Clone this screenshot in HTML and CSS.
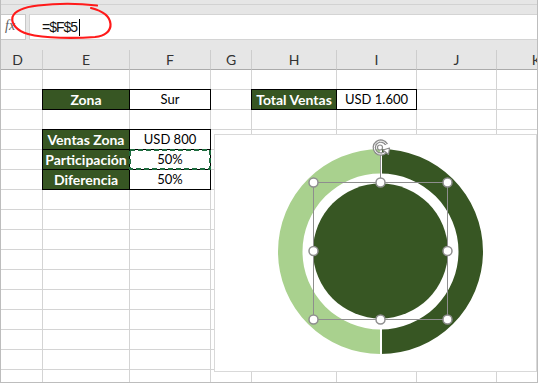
FILE: index.html
```html
<!DOCTYPE html>
<html lang="es">
<head>
    <meta charset="UTF-8">
    <title>Participación por zona</title>
    <link rel="stylesheet" href="styles.css">
</head>
<body>
    <div class="window">
        <div class="top-edge"></div>
        <div class="formula-bar">
            <div class="fx">fx</div>
            <div class="formula-input">=$F$5<span class="caret"></span></div>
        </div>

        <div class="sheet" id="sheet">
            <!-- cells are built by the script below -->
        </div>

        <div class="chart">
            <svg class="donut" width="321" height="236" viewBox="215 135 321 236">
                <!-- outer ring: Participación / Diferencia -->
                <path d="M380.5 149 A102.5 102.5 0 0 0 380.5 354 L380.5 329.5 A78 78 0 0 1 380.5 173.5 Z" fill="#a9d18e"/>
                <path d="M380.5 149 A102.5 102.5 0 0 1 380.5 354 L380.5 329.5 A78 78 0 0 0 380.5 173.5 Z" fill="#375623"/>
                <line x1="381" y1="147" x2="381" y2="356" stroke="#fff" stroke-width="2"/>
                <!-- inner pie -->
                <circle cx="380.5" cy="251" r="67.5" fill="#375623"/>

                <!-- selection frame -->
                <g class="selection">
                    <line x1="380.5" y1="155" x2="380.5" y2="182.5"/>
                    <rect x="313.5" y="182.5" width="134" height="137" fill="none"/>
                    <circle cx="313.5" cy="182.5" r="4.5"/>
                    <circle cx="380.5" cy="182.5" r="4.5"/>
                    <circle cx="447.5" cy="182.5" r="4.5"/>
                    <circle cx="313.5" cy="251" r="4.5"/>
                    <circle cx="447.5" cy="251" r="4.5"/>
                    <circle cx="313.5" cy="319.5" r="4.5"/>
                    <circle cx="380.5" cy="319.5" r="4.5"/>
                    <circle cx="447.5" cy="319.5" r="4.5"/>
                </g>
                <!-- rotate handle -->
                <g class="rotate">
                    <path d="M386 151.5 A6.5 6.5 0 1 1 386.5 144.5" stroke="#8c8c8c" stroke-width="3.5" fill="none"/>
                    <path d="M386 151.5 A6.5 6.5 0 1 1 386.5 144.5" stroke="#fff" stroke-width="1" fill="none"/>
                    <circle cx="380" cy="147.5" r="2.5" fill="#fff" stroke="#8c8c8c" stroke-width="1.2"/>
                    <path d="M383 150 L389.5 148 L388.5 154.5 Z" fill="#fff" stroke="#8c8c8c" stroke-width="1.2" stroke-linejoin="round"/>
                </g>
            </svg>
        </div>

        <svg class="scribble" width="120" height="45" viewBox="0 0 120 45">
            <path d="M97 5.5 C80 3.5 55 3.5 38 5.5 C25 7 15 10 12.5 17 C11 24 17 31 28 34 C45 38.5 75 38.5 95 37 C105 36 111 31 110.5 24 C110 17 103 11 91 8"
                  fill="none" stroke="#ff1a1a" stroke-width="2.2" stroke-linecap="round"/>
        </svg>
    </div>

    <script>
        const columns = ['D', 'E', 'F', 'G', 'H', 'I', 'J', 'K'];
        const rowCount = 16;

        // contents of the used cells
        const cells = {
            E2: { text: 'Zona', type: 'label' },
            F2: { text: 'Sur', type: 'value' },
            H2: { text: 'Total Ventas', type: 'label' },
            I2: { text: 'USD 1.600', type: 'value' },
            E4: { text: 'Ventas Zona', type: 'label' },
            F4: { text: 'USD 800', type: 'value' },
            E5: { text: 'Participación', type: 'label' },
            F5: { text: '50%', type: 'value', copied: true },
            E6: { text: 'Diferencia', type: 'label' },
            F6: { text: '50%', type: 'value' }
        };

        function renderSheet() {
            const sheet = document.getElementById('sheet');

            columns.forEach(col => {
                const head = document.createElement('div');
                head.className = 'col-head';
                if (col === 'D') head.classList.add('first');
                head.textContent = col;
                sheet.appendChild(head);
            });

            for (let row = 1; row <= rowCount; row++) {
                columns.forEach(col => {
                    const div = document.createElement('div');
                    div.className = 'cell';
                    const data = cells[col + row];
                    if (data) {
                        div.textContent = data.text;
                        div.classList.add('boxed', data.type);
                        if (data.copied) {
                            div.insertAdjacentHTML('beforeend',
                                '<svg class="ants" width="82" height="21"><rect x="1" y="1" width="80" height="19" /></svg>');
                        }
                    }
                    sheet.appendChild(div);
                });
            }
        }

        renderSheet();
    </script>
</body>
</html>
```

FILE: styles.css
```css
body {
    margin: 0;
    font-family: Lato, "Liberation Sans", sans-serif;
}
.window {
    position: relative;
    width: 538px;
    height: 383px;
    box-sizing: border-box;
    border: 1px solid #bdbdbd;
    border-top: none;
    background-color: #e6e6e6;
    overflow: hidden;
}
.top-edge {
    height: 4px;
    border-bottom: 1px solid #d2d2d2;
}
.formula-bar {
    display: flex;
    gap: 3px;
    height: 26px;
    padding-top: 9px;
    margin-bottom: 10px;
}
.fx {
    width: 25px;
    box-sizing: border-box;
    padding: 3px 0 0 4px;
    background-color: white;
    border: 1px solid #c8c8c8;
    border-left: none;
    font-family: "Liberation Serif", serif;
    font-style: italic;
    font-size: 14px;
    color: #5f5f5f;
}
.formula-input {
    flex: 1;
    padding-left: 12px;
    background-color: white;
    border: 1px solid #d4d4d4;
    border-right: none;
    font-family: "Liberation Sans", sans-serif;
    font-size: 14px;
    letter-spacing: -1px;
    line-height: 24px;
    color: #111;
}
.caret {
    display: inline-block;
    width: 1px;
    height: 17px;
    margin-left: 2px;
    vertical-align: -4px;
    background-color: black;
}
.sheet {
    display: grid;
    grid-template-columns: 42px 87px 81px 41px 85px 80px 80px 80px;
    grid-auto-rows: 20px;
}
.col-head {
    box-sizing: border-box;
    border-right: 1px solid #cdcdcd;
    border-bottom: 1px solid #ababab;
    font-size: 14px;
    line-height: 19px;
    text-align: center;
    color: #333;
}
.col-head.first {
    padding-right: 8px;
}
.cell {
    position: relative;
    box-sizing: border-box;
    border-right: 1px solid #d4d4d4;
    border-bottom: 1px solid #d4d4d4;
    background-color: white;
    font-size: 13px;
    line-height: 19px;
    text-align: center;
    white-space: nowrap;
    color: black;
}
.cell.boxed {
    border-right-color: black;
    border-bottom-color: black;
    box-shadow: -1px 0 0 black, 0 -1px 0 black, -1px -1px 0 black;
}
.cell.label {
    background-color: #375623;
    color: white;
    font-size: 14px;
    font-weight: bold;
}
.ants {
    position: absolute;
    left: -1px;
    top: -1px;
    z-index: 1;
}
.ants rect {
    fill: none;
    stroke: #1e6b3e;
    stroke-width: 2;
    stroke-dasharray: 5 3;
}
.chart {
    position: absolute;
    z-index: 2;
    left: 213px;
    top: 134px;
    width: 323px;
    height: 238px;
    box-sizing: border-box;
    border: 1px solid #d9d9d9;
    background-color: white;
}
.donut {
    display: block;
}
.selection line,
.selection rect {
    stroke: #8e8e8e;
    stroke-width: 1;
}
.selection circle {
    fill: white;
    stroke: #8e8e8e;
    stroke-width: 1.5;
}
.scribble {
    position: absolute;
    z-index: 2;
    left: -1px;
    top: 0;
}
```
